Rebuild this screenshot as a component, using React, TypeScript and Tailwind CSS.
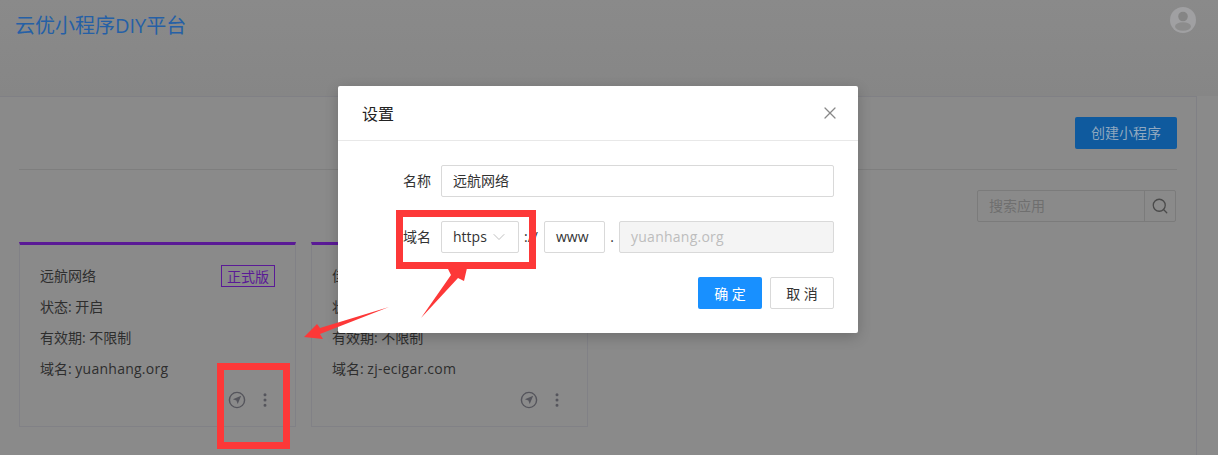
import { Search, ChevronDown, X, EllipsisVertical } from 'lucide-react'

const font = { fontFamily: '"Open Sans", "Noto Sans CJK SC", sans-serif' }

const apps = [
  { name: '远航网络', domain: 'yuanhang.org' },
  { name: '佳烟科技', domain: 'zj-ecigar.com' },
]

function NavIcon() {
  return (
    <svg width="18" height="18" viewBox="0 0 18 18" fill="none">
      <circle cx="9" cy="9" r="7.6" stroke="#55555c" strokeWidth="1.4" />
      <path d="M13.2 4.8 L4.9 8.3 L8.4 9.6 L9.7 13.1 Z" fill="#55555c" />
    </svg>
  )
}

function AppCard({ name, domain }: { name: string; domain: string }) {
  return (
    <div className="w-[277px] h-[185px] border border-[#818186] border-t-[3px] border-t-[#5a1a96] pt-[19px] px-[20px] text-[14px] text-[#2e2e2e]">
      <div className="flex justify-between items-center h-[24px]">
        <span className="pb-[2px]">{name}</span>
        <span className="w-[54px] h-[22px] border border-[#5a1a96] text-[#5a1a96] flex items-center justify-center">正式版</span>
      </div>
      <div className="h-[31px] mt-[7px] leading-[24px]">状态: 开启</div>
      <div className="h-[31px] leading-[24px]">有效期: 不限制</div>
      <div className="h-[24px] leading-[24px]">
        域名: <span className="tracking-[0.25px]">{domain}</span>
      </div>
      <div className="flex justify-end items-center gap-[10px] mt-[7px] mr-[1px] h-[24px]">
        <NavIcon />
        <EllipsisVertical size={18} strokeWidth={2} className="text-[#55555c]" />
      </div>
    </div>
  )
}

function Annotations() {
  return (
    <>
      <div className="absolute left-[217px] top-[363px] w-[73px] h-[86px] border-[7px] border-[#fd3838]" />
      <div className="absolute left-[396px] top-[210px] w-[140px] h-[59px] border-[7px] border-[#fd3838]" />
      <svg className="absolute left-0 top-0" width="1218" height="455" viewBox="0 0 1218 455">
        <polygon points="421,318 451,275 448,269 467,268 464,281 458,278" fill="#fd3838" />
        <polygon points="389,307 320,328 317,324 304,337 323,339 320,334" fill="#fd3838" />
      </svg>
    </>
  )
}

function Modal() {
  return (
    <div className="absolute left-[338px] top-[86px] w-[520px] h-[247px] bg-white rounded-[2px] shadow-[0_4px_14px_rgba(0,0,0,0.2)] text-[14px] text-[#333]">
      <div className="h-[55px] border-b border-[#e8e8e8] pl-[24px] pr-[20px] flex items-center justify-between">
        <span className="text-[16px] text-[#222] pt-[2px]">设置</span>
        <X size={20} strokeWidth={1.5} className="text-[#888] -mr-[2px]" />
      </div>
      <div className="pt-[24px] pr-[24px]">
        <div className="flex items-center h-[32px]">
          <span className="w-[93px] text-right pb-[2px]">名称</span>
          <div className="ml-[10px] flex-1 h-[32px] pb-[2px] border border-[#d9d9d9] rounded-[2px] pl-[11px] flex items-center">远航网络</div>
        </div>
        <div className="flex items-center h-[32px] mt-[24px]">
          <span className="w-[93px] text-right pb-[2px]">域名</span>
          <div className="ml-[10px] w-[78px] h-[32px] pb-[2px] border border-[#d9d9d9] rounded-[2px] pl-[11px] pr-[9px] flex items-center justify-between">
            <span>https</span>
            <ChevronDown size={20} strokeWidth={0.9} className="text-[#aaa] mt-[2px]" />
          </div>
          <span className="w-[25px] pl-[5px] pb-[2px]">://</span>
          <div className="w-[61px] h-[32px] pb-[2px] border border-[#d9d9d9] rounded-[2px] pl-[11px] flex items-center">www</div>
          <span className="w-[14px] text-center pb-[2px]">.</span>
          <div className="flex-1 h-[32px] pb-[2px] border border-[#d9d9d9] bg-[#f4f4f4] text-[#bdbdbd] rounded-[2px] pl-[11px] flex items-center tracking-[0.25px]">yuanhang.org</div>
        </div>
        <div className="flex justify-end gap-[8px] mt-[24px]">
          <button className="w-[64px] h-[32px] bg-[#1890ff] text-white rounded-[2px]">确 定</button>
          <button className="w-[64px] h-[32px] border border-[#d9d9d9] rounded-[2px]">取 消</button>
        </div>
      </div>
    </div>
  )
}

export default function App() {
  return (
    <div className="relative w-[1218px] h-[455px] overflow-hidden bg-[#8a8a8a]" style={font}>
      <div className="h-[96px] pl-[15px] pr-[22px] pt-[11px] flex justify-between items-start bg-gradient-to-b from-[#8a8a8a] to-[#868686]">
        <span className="text-[20px] leading-[30px] text-[#2560a6]">云优小程序DIY平台</span>
        <svg width="26" height="26" viewBox="0 0 26 26" className="-mt-[4px]">
          <circle cx="13" cy="13" r="13" fill="#a0a0a2" />
          <circle cx="13" cy="9.5" r="4.8" fill="#858585" />
          <ellipse cx="13" cy="19.5" rx="8" ry="4.2" fill="#8c8c8c" />
        </svg>
      </div>
      <div className="-ml-px mr-[21px] h-[400px] border border-[#808085] pt-[20px] px-[19px]">
        <div className="h-[53px] border-b border-[#7e7e7e] flex justify-end items-start">
          <button className="w-[102px] h-[32px] pb-[2px] bg-[#0f5a9e] text-[#90a8bf] text-[14px] rounded-[2px]">创建小程序</button>
        </div>
        <div className="flex justify-end mt-[20px] pr-px">
          <div className="w-[199px] h-[32px] border border-[#7b7b7b] rounded-[2px] flex text-[14px] text-[#6f6f6f]">
            <span className="flex-1 pl-[11px] pb-[2px] flex items-center">搜索应用</span>
            <span className="w-[31px] border-l border-[#7b7b7b] flex items-center justify-center">
              <Search size={18} strokeWidth={1.7} className="text-[#4a4a4a]" />
            </span>
          </div>
        </div>
        <div className="flex gap-[15px] mt-[20px]">
          {apps.map((app) => (
            <AppCard key={app.domain} {...app} />
          ))}
        </div>
      </div>
      <Modal />
      <Annotations />
    </div>
  )
}
